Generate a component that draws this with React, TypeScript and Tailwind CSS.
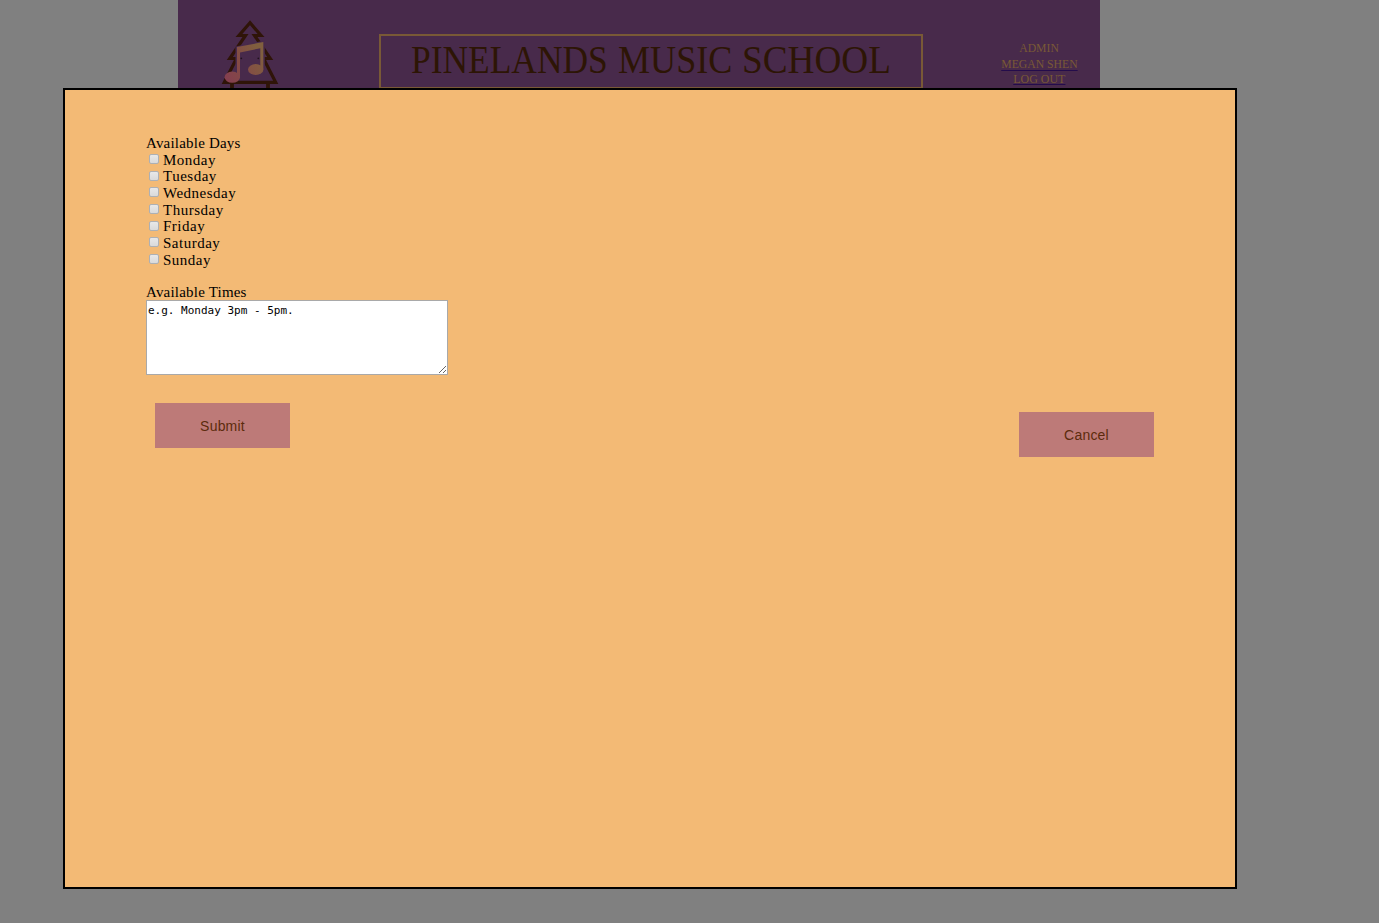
const DAYS = ['Monday', 'Tuesday', 'Wednesday', 'Thursday', 'Friday', 'Saturday', 'Sunday'];

function Logo() {
  return (
    <svg width="60" height="76" viewBox="220 18 60 76" className="block" fill="none">
      <defs>
        <linearGradient id="note" gradientUnits="userSpaceOnUse" x1="226" y1="78" x2="263" y2="56">
          <stop offset="0" stopColor="#843f4f" />
          <stop offset="0.45" stopColor="#844b45" />
          <stop offset="1" stopColor="#805f3e" />
        </linearGradient>
      </defs>
      <path
        d="M250 22.800L239 35.500H245.500L229.800 58.500H236.500L224.300 82.300H275.700L263.500 58.500H270.200L254.500 35.500H261Z"
        stroke="#2f1408"
        strokeWidth="3.2"
      />
      <path d="M232 83V94M268 83V94" stroke="#2f1408" strokeWidth="3.8" />
      <path d="M235.500 46.500L264.800 40.500V73L262 76H240L235.500 72Z" fill="#482a4b" />
      <circle cx="241.300" cy="58.300" r="0.9" fill="#21131f" />
      <circle cx="258.300" cy="58.300" r="0.9" fill="#21131f" />
      <path d="M237 47L263.300 42V69H260.300V48.300L240 52.500V77H237Z" fill="url(#note)" />
      <ellipse cx="232.300" cy="77.200" rx="7.700" ry="5.600" fill="url(#note)" />
      <ellipse cx="255.700" cy="69.500" rx="7.700" ry="5.400" fill="url(#note)" />
    </svg>
  );
}

function Header() {
  return (
    <header className="ml-[178px] flex h-[88px] w-[922px] items-start overflow-hidden bg-[#482a4b] font-['Liberation_Serif',serif]">
      <div className="ml-[42px] mt-[18px] h-[76px] w-[60px] shrink-0">
        <Logo />
      </div>
      <h1 className="ml-[99px] mt-[34px] flex h-[55px] w-[544px] shrink-0 border-2 border-[#795936] pl-[30px] pt-[1px] text-[39px] leading-[46px] text-[#2d1505]">
        <span className="w-[207px] shrink-0"><span className="inline-block origin-left scale-x-[0.908]">PINELANDS</span></span>
        <span className="w-[124px] shrink-0"><span className="inline-block origin-left scale-x-[0.925]">MUSIC</span></span>
        <span className="shrink-0"><span className="inline-block origin-left scale-x-[0.955]">SCHOOL</span></span>
      </h1>
      <nav className="ml-[66px] mt-[40px] flex w-[100px] shrink-0 flex-col items-center text-[13px] leading-[15.5px] text-[#795936]">
        <span className="scale-x-[0.9]">ADMIN</span>
        <a className="scale-x-[0.9] underline decoration-[#240c4b] underline-offset-2">MEGAN SHEN</a>
        <a className="scale-x-[0.92] underline decoration-[#240c4b] underline-offset-1">LOG OUT</a>
      </nav>
    </header>
  );
}

export default function App() {
  return (
    <div className="h-[923px] w-[1379px] overflow-hidden bg-[#808080]">
      <Header />
      <main className="ml-[63px] flex h-[801px] w-[1174px] items-start justify-between border-2 border-black bg-[#f3ba75] pl-[81px] pr-[81px] font-['Liberation_Serif',serif]">
        <form className="pt-[45px] text-[15px] leading-[16.67px] tracking-[0.2px] text-black">
          <div>Available Days</div>
          {DAYS.map((day) => (
            <label key={day} className="flex h-[16.67px] items-start pl-[3px] tracking-[0.5px]">
              <input
                type="checkbox"
                className="mr-[4px] mt-[2.3px] h-[10px] w-[10px] appearance-none rounded-[2px] border border-[#adb0b4] bg-linear-to-b from-[#e8e8e8] to-[#dadada]"
              />
              {day}
            </label>
          ))}
          <div className="mt-[16px] h-[15.6px]">Available Times</div>
          <textarea
            className="block h-[75px] w-[302px] resize rounded-none border border-[#a9a9a9] bg-white px-[1px] py-[2px] font-['DejaVu_Sans_Mono',monospace] text-[11px] leading-[15px] tracking-normal"
            defaultValue="e.g. Monday 3pm - 5pm."
          />
          <button
            type="button"
            className="ml-[9px] mt-[28px] block h-[45px] w-[135px] bg-[#bd7a78] pt-[2px] font-['Liberation_Sans',sans-serif] text-[14px] tracking-[0.2px] text-[#5c2b0c]"
          >
            Submit
          </button>
        </form>
        <button
          type="button"
          className="mt-[322px] h-[45px] w-[135px] bg-[#bd7a78] pt-[2px] font-['Liberation_Sans',sans-serif] text-[14px] tracking-[0.2px] text-[#5c2b0c]"
        >
          Cancel
        </button>
      </main>
    </div>
  );
}
